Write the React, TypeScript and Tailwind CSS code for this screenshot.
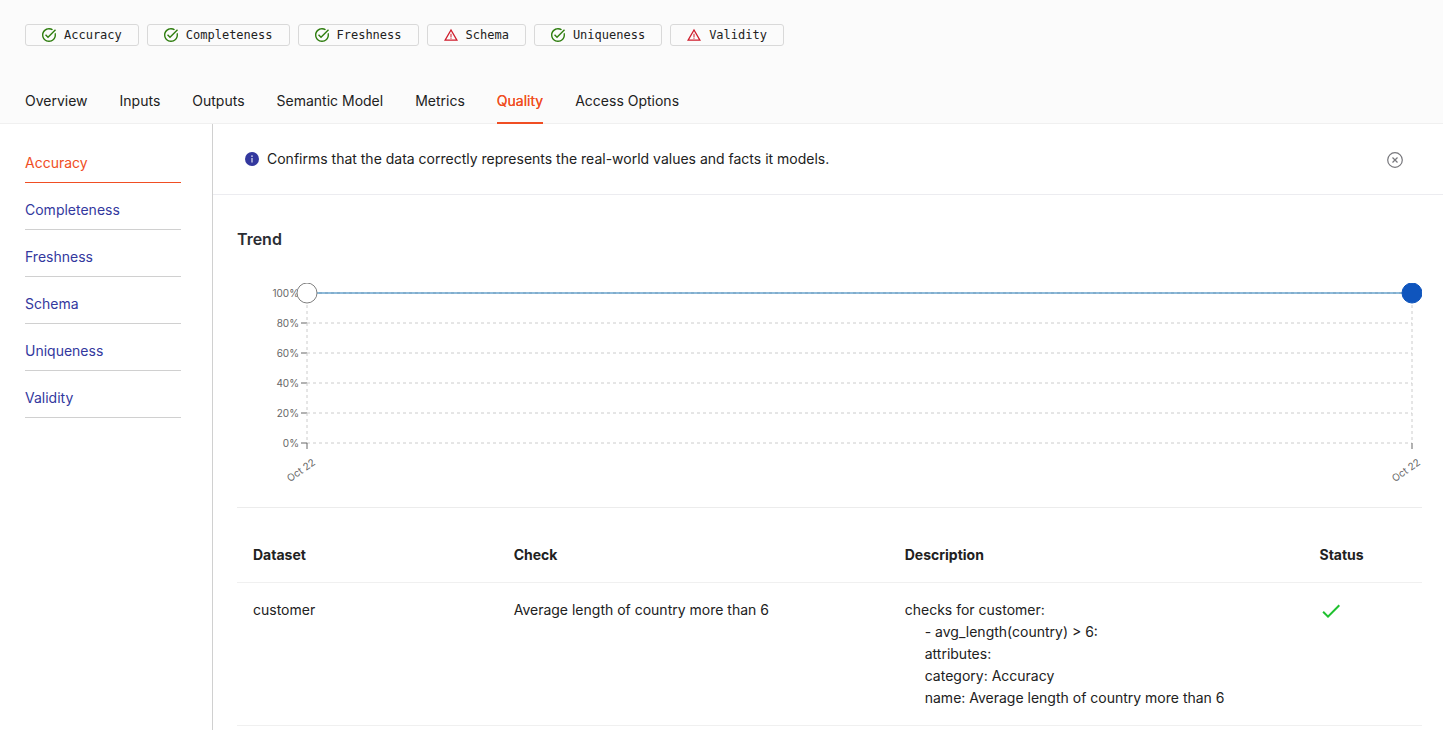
import { useState } from "react";
import { MdCheck } from "react-icons/md";

type Dimension = { name: string; passed: boolean };

const dimensions: Dimension[] = [
  { name: "Accuracy", passed: true },
  { name: "Completeness", passed: true },
  { name: "Freshness", passed: true },
  { name: "Schema", passed: false },
  { name: "Uniqueness", passed: true },
  { name: "Validity", passed: false },
];

const tabs = ["Overview", "Inputs", "Outputs", "Semantic Model", "Metrics", "Quality", "Access Options"];

const gridRows = [
  { label: "100%", y: 10 },
  { label: "80%", y: 40 },
  { label: "60%", y: 70 },
  { label: "40%", y: 100 },
  { label: "20%", y: 130 },
  { label: "0%", y: 160 },
];

function PassedIcon() {
  return (
    <svg viewBox="2 2 20 20" className="size-[14px] text-[#2e7d0e]" fill="currentColor" aria-hidden="true">
      <path d="M22 5.18L10.59 16.6l-4.24-4.24 1.41-1.41 2.83 2.83 10-10L22 5.18zm-2.21 5.04c.13.57.21 1.17.21 1.78 0 4.42-3.58 8-8 8s-8-3.58-8-8 3.58-8 8-8c1.58 0 3.04.46 4.28 1.25l1.44-1.44A9.9 9.9 0 0012 2C6.48 2 2 6.48 2 12s4.48 10 10 10 10-4.48 10-10c0-1.19-.22-2.33-.6-3.39l-1.61 1.61z" />
    </svg>
  );
}

function FailedIcon() {
  return (
    <svg viewBox="1 1 22 22" className="size-[14px] text-[#cf1c2c]" fill="currentColor" aria-hidden="true">
      <path d="M12 5.99L19.53 19H4.47L12 5.99M12 2L1 21h22L12 2z" />
      <path d="M13 16h-2v2h2zm0-6h-2v5h2z" opacity="0.8" />
    </svg>
  );
}

function InfoIcon() {
  return (
    <svg viewBox="0 0 14 14" className="size-[14px]" aria-hidden="true">
      <circle cx="7" cy="7" r="7" fill="#33389e" />
      <path d="M6.5 6h1v4.5h-1zM6.3 3.4h1.4v1.4H6.3z" fill="#fff" />
    </svg>
  );
}

function CloseIcon() {
  return (
    <svg viewBox="0 0 16 16" className="size-4" fill="none" stroke="currentColor" aria-hidden="true">
      <circle cx="8" cy="8" r="7.3" strokeWidth="1.2" />
      <path d="M5.5 5.5l5 5M10.5 5.5l-5 5" strokeWidth="1.2" />
    </svg>
  );
}

function Tag({ name, passed }: Dimension) {
  return (
    <li className="flex h-[22px] items-center gap-2 rounded-[3px] border border-[#d9d9d9] px-4 font-['DejaVu_Sans_Mono',monospace] text-xs">
      {passed ? <PassedIcon /> : <FailedIcon />}
      {name}
    </li>
  );
}

function DateTick({ x }: { x: string }) {
  return (
    <svg x={x} y="160" overflow="visible">
      <line y2="6" stroke="#666" />
      <text transform="translate(9 21) rotate(-35)" textAnchor="end" className="fill-[#666] text-[10px]">
        Oct 22
      </text>
    </svg>
  );
}

function TrendChart() {
  return (
    <div className="h-[200px] overflow-hidden pr-[10px] pl-[70px]">
      <svg className="block h-[200px] w-full overflow-visible" role="img" aria-label="Trend">
        {gridRows.map(({ label, y }) => (
          <g key={label}>
            <line x1="0" x2="100%" y1={y} y2={y} stroke="#ccc" strokeDasharray="3 3" />
            <line x1="-6" x2="0" y1={y} y2={y} stroke="#666" />
            <text x="-8" y={y + 4} textAnchor="end" className="fill-[#666] text-[10px]">
              {label}
            </text>
          </g>
        ))}
        <line x1="0" x2="0" y1="10" y2="160" stroke="#ccc" strokeDasharray="3 3" />
        <line x1="100%" x2="100%" y1="10" y2="160" stroke="#ccc" strokeDasharray="3 3" />
        <DateTick x="0" />
        <DateTick x="100%" />
        <line x1="0" x2="100%" y1="10" y2="10" stroke="#1f77b4" />
        <circle cx="0" cy="10" r="10" fill="#fff" stroke="#808080" />
        <circle cx="100%" cy="10" r="10" fill="#0f55bd" stroke="#0f55bd" />
      </svg>
    </div>
  );
}

export default function App() {
  const [tab, setTab] = useState("Quality");
  const [selected, setSelected] = useState("Accuracy");
  const [showInfo, setShowInfo] = useState(true);

  return (
    <div className="flex min-h-screen flex-col bg-white font-[Inter,sans-serif] text-sm leading-[22px] text-[#212121]">
      <header className="border-b border-[#f0f0f0] bg-[#fbfbfb] px-[25px] pt-6">
        <ul className="flex flex-wrap gap-2">
          {dimensions.map((d) => (
            <Tag key={d.name} {...d} />
          ))}
        </ul>
        <nav className="mt-8 -mb-px flex gap-8">
          {tabs.map((name) => (
            <button
              key={name}
              type="button"
              onClick={() => setTab(name)}
              className={
                name === tab
                  ? "border-b-2 border-[#f04e23] pt-3 pb-[10px] text-[#f04e23] [text-shadow:0_0_0.25px_currentColor]"
                  : "border-b-2 border-transparent pt-3 pb-[10px]"
              }
            >
              {name}
            </button>
          ))}
        </nav>
      </header>

      <div className="flex flex-1">
        <aside className="w-[213px] shrink-0 border-r border-[#d0d0d0] pt-3 pr-[31px] pl-[25px]">
          {dimensions.map(({ name }) => (
            <button
              key={name}
              type="button"
              onClick={() => setSelected(name)}
              className={
                name === selected
                  ? "block w-full border-b border-[#f04e23] pt-4 pb-2 text-left text-[#f04e23]"
                  : "block w-full border-b border-[#d0d0d0] pt-4 pb-2 text-left text-[#33389e]"
              }
            >
              {name}
            </button>
          ))}
        </aside>

        <main className="min-w-0 flex-1">
          {showInfo && (
            <div className="flex items-start border-b border-[#ececf0] py-6 pr-10 pl-8">
              <div className="flex flex-1 items-center gap-2">
                <InfoIcon />
                <p>Confirms that the data correctly represents the real-world values and facts it models.</p>
              </div>
              <button type="button" aria-label="Close" onClick={() => setShowInfo(false)} className="pt-1 text-[#77777c]">
                <CloseIcon />
              </button>
            </div>
          )}

          <section className="pt-8 pr-[21px] pl-6">
            <h2 className="mb-8 text-base leading-6 font-semibold text-[#2b2d33]">Trend</h2>
            <TrendChart />
            <div className="mt-6 border-t border-[#ececec] pt-5">
              <table className="w-full table-fixed border-collapse text-left">
                <thead>
                  <tr className="border-b border-[#f0f0f0]">
                    <th className="w-[22%] p-4 font-bold">Dataset</th>
                    <th className="w-[33%] p-4 font-bold">Check</th>
                    <th className="w-[35%] p-4 font-bold">Description</th>
                    <th className="w-[10%] p-4 font-bold">Status</th>
                  </tr>
                </thead>
                <tbody>
                  <tr className="border-b border-[#f0f0f0] align-top">
                    <td className="p-4">customer</td>
                    <td className="p-4">Average length of country more than 6</td>
                    <td className="p-4">
                      <p>checks for customer:</p>
                      <div className="pl-5">
                        <p>- avg_length(country) &gt; 6:</p>
                        <p>attributes:</p>
                        <p>category: Accuracy</p>
                        <p>name: Average length of country more than 6</p>
                      </div>
                    </td>
                    <td className="p-4">
                      <MdCheck className="size-6 text-[#1fc12f]" title="Passed" />
                    </td>
                  </tr>
                </tbody>
              </table>
            </div>
          </section>
        </main>
      </div>
    </div>
  );
}
